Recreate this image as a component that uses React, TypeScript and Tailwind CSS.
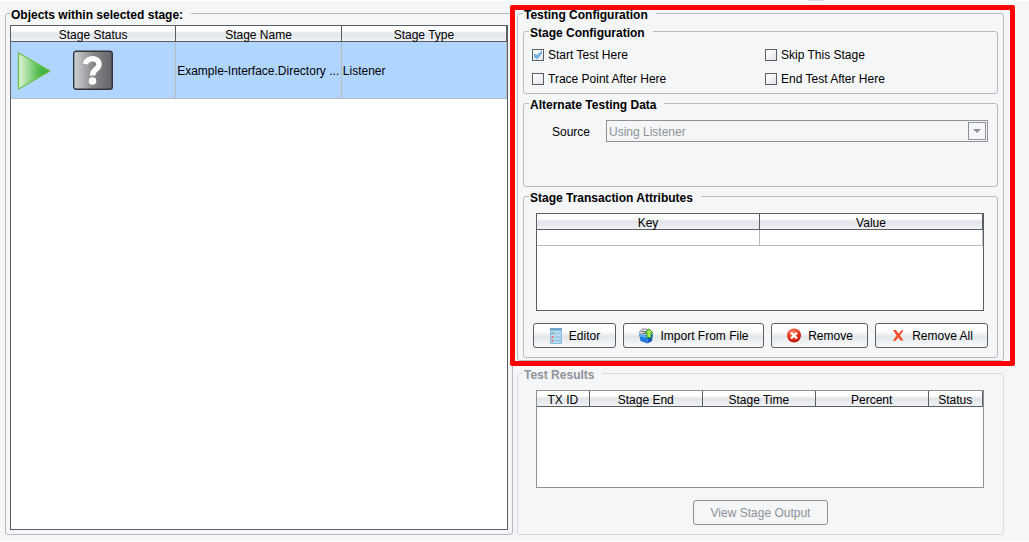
import type { ReactNode } from 'react'

type Column = { label: string; width: string }

const stageColumns: Column[] = [
  { label: 'Stage Status', width: 'w-[33.3%]' },
  { label: 'Stage Name', width: 'w-[33.4%]' },
  { label: 'Stage Type', width: 'w-[33.3%]' },
]

const attributeColumns: Column[] = [
  { label: 'Key', width: 'w-1/2' },
  { label: 'Value', width: 'w-1/2' },
]

const resultColumns: Column[] = [
  { label: 'TX ID', width: 'w-[11.8%]' },
  { label: 'Stage End', width: 'w-[25.4%]' },
  { label: 'Stage Time', width: 'w-[25.3%]' },
  { label: 'Percent', width: 'w-[25.3%]' },
  { label: 'Status', width: 'w-[12.2%]' },
]

const stageOptions = [
  { id: 'start-test', label: 'Start Test Here', checked: true },
  { id: 'skip-stage', label: 'Skip This Stage', checked: false },
  { id: 'trace-point', label: 'Trace Point After Here', checked: false },
  { id: 'end-test', label: 'End Test After Here', checked: false },
]

function PlayIcon() {
  return (
    <svg width="36" height="40" viewBox="0 0 36 40" aria-hidden="true">
      <defs>
        <linearGradient id="play" x1="0" x2="1" y1="0" y2="0">
          <stop offset="0" stopColor="#e4f5d8" />
          <stop offset="0.65" stopColor="#4fbb4c" />
          <stop offset="1" stopColor="#2fae35" />
        </linearGradient>
      </defs>
      <path d="M1.500 3L33 21 L1.500 39 Z" fill="url(#play)" stroke="#6cc24a" strokeWidth="1.400" strokeLinejoin="round" />
    </svg>
  )
}

function UnknownIcon() {
  return (
    <svg width="40" height="40" viewBox="0 0 40 40" aria-hidden="true">
      <defs>
        <linearGradient id="unknown" x1="0" x2="1" y1="0" y2="0">
          <stop offset="0" stopColor="#d2d3d5" />
          <stop offset="0.5" stopColor="#88898c" />
          <stop offset="1" stopColor="#626366" />
        </linearGradient>
      </defs>
      <rect x="0.7" y="1.200" width="38.6" height="38.1" rx="2.500" fill="url(#unknown)" stroke="#333438" strokeWidth="1.400" />
      <path d="M12.500 14 C13.500 7 26 7 26 14.500 C26 19.500 19.500 19 19.500 25.500" fill="none" stroke="#fff" strokeWidth="5.500" />
      <circle cx="19.5" cy="31" r="3.800" fill="#fff" />
    </svg>
  )
}

function EditorIcon() {
  return (
    <svg width="14" height="16" viewBox="0 0 14 16" aria-hidden="true">
      <rect x="1.5" y="0.5" width="11" height="15" fill="#b5d9ef" stroke="#8bbddb" />
      <path d="M1 0h12v2.500H1z" fill="#6ba6cc" />
      <path d="M6 5.500h6M6 9h6M6 12.500h6" stroke="#8cbfe0" strokeWidth="1" />
      <path d="M2.500 5l1 1 1.500-2" fill="none" stroke="#3f9a68" />
      <path d="M2.500 8h2v2h-2zM2.500 11.800h2v2h-2z" fill="#e2737c" />
    </svg>
  )
}

function ImportIcon() {
  return (
    <svg width="16" height="16" viewBox="0 0 16 16" aria-hidden="true">
      <path d="M1.500 4L4 1h5l3 3v4h-9z" fill="#d9dadb" stroke="#8b8d90" />
      <path d="M3.500 3.500h5M4 5.500h5" stroke="#6b6e72" />
      <path d="M1 6l8.500 1.500v8L2.500 13z" fill="#1f78dc" />
      <path d="M9.500 7.500L15 6l-1 7-4.500 2.500z" fill="#1158b8" />
      <path d="M1.500 6.500l8 1.500v2L2 8.500z" fill="#62aef5" />
      <path d="M11 .8L14.800 5H13v4.500H9V5H7.200z" fill="#a6ee56" stroke="#2b9a1c" />
    </svg>
  )
}

function RemoveIcon() {
  return (
    <svg width="16" height="16" viewBox="0 0 16 16" aria-hidden="true">
      <defs>
        <radialGradient id="remove" cx="0.4" cy="0.3" r="0.7">
          <stop offset="0" stopColor="#ff8a63" />
          <stop offset="0.6" stopColor="#e9361c" />
          <stop offset="1" stopColor="#b81408" />
        </radialGradient>
      </defs>
      <circle cx="8" cy="7.500" r="7" fill="url(#remove)" />
      <path d="M5 4.500l6 6M11 4.500l-6 6" stroke="#fff" strokeWidth="2.400" />
    </svg>
  )
}

function RemoveAllIcon() {
  return (
    <svg width="16" height="16" viewBox="0 0 16 16" aria-hidden="true">
      <path d="M3 2h3l2.500 3.500L12 2l1.500.5L10 7.500l3.500 5h-3L8 9.500 5.500 13 3 12.500l3.500-5z" fill="#f2512c" />
    </svg>
  )
}

function Panel({ title, muted, className, children }: { title: string; muted?: boolean; className: string; children: ReactNode }) {
  return (
    <fieldset className={`min-w-0 rounded-[3px] border ${muted ? 'border-[#d8dadd]' : 'border-[#b8bbbf]'} ${className}`}>
      <legend className={`pt-[3px] pr-2 pl-px font-bold leading-[14px] ${muted ? 'text-[#8e9297]' : 'text-black'}`}>{title}</legend>
      {children}
    </fieldset>
  )
}

function HeaderRow({ columns }: { columns: Column[] }) {
  return (
    <thead>
      <tr>
        {columns.map((column) => (
          <th
            key={column.label}
            scope="col"
            className={`h-4 border-r border-b border-[#5b5f64] bg-linear-to-b from-white from-30% via-[#e2e5e9] via-50% to-[#f0f2f4] p-0 pt-[3px] text-center font-normal leading-3 whitespace-nowrap ${column.width}`}
          >
            {column.label}
          </th>
        ))}
      </tr>
    </thead>
  )
}

function ToolButton({ icon, label }: { icon: ReactNode; label: string }) {
  return (
    <button
      type="button"
      className="flex h-[25px] items-center justify-center gap-1.5 rounded-[3px] border border-[#5b5f64] bg-linear-to-b from-white from-30% via-[#e4e7ea] via-55% to-[#f8f9fa] whitespace-nowrap"
    >
      {icon}
      {label}
    </button>
  )
}

export default function App() {
  return (
    <main className="min-h-screen border-b border-white bg-[#f4f6f8] font-['Liberation_Sans',Arial,sans-serif] text-[12px] leading-4 text-black">
      <div className="flex h-px justify-end bg-white pr-[205px]">
        <div className="w-4 bg-[#dcdde0]" />
      </div>

      <div className="grid grid-cols-[508fr_487fr] gap-1 pt-1 pr-[25px] pb-1.5 pl-[5px]">
        {/* Stage list */}
        <Panel title="Objects within selected stage:" className="flex flex-col px-1 pt-[3px] pb-1">
          <div className="h-full flex-1 border border-[#5b5f64] bg-white">
            <table className="w-full table-fixed border-separate border-spacing-0">
              <HeaderRow columns={stageColumns} />
              <tbody>
                <tr className="bg-[#b0d5ff]">
                  <td className="h-[57px] border-r border-b border-[#b8bbbf] p-0">
                    <div className="flex items-center gap-5 pl-1.5">
                      <PlayIcon />
                      <UnknownIcon />
                    </div>
                  </td>
                  <td className="border-r border-b border-[#b8bbbf] p-0 pt-0.5 pl-px whitespace-nowrap">Example-Interface.Directory ...</td>
                  <td className="border-r border-b border-[#b8bbbf] p-0 pt-0.5 pl-px whitespace-nowrap">Listener</td>
                </tr>
              </tbody>
            </table>
          </div>
        </Panel>

        <div className="flex min-w-0 flex-col gap-1">
          <div className="relative">
            <Panel title="Testing Configuration" className="px-[5px] pt-px pb-0.5">
              <div className="flex flex-col gap-px">
                <Panel title="Stage Configuration" className="px-[5px] pt-[3px] pb-0.5">
                  <div className="grid grid-cols-[233fr_227fr] pl-[3px]">
                    {stageOptions.map((option) => (
                      <label key={option.id} htmlFor={option.id} className="flex h-6 items-center gap-1">
                        <span className="relative flex">
                          <input
                            id={option.id}
                            type="checkbox"
                            defaultChecked={option.checked}
                            className="peer size-3 appearance-none border border-[#5b5f64] bg-linear-to-br from-white to-[#e3e5e8]"
                          />
                          <svg className="pointer-events-none absolute inset-0 hidden peer-checked:block" width="12" height="12" viewBox="0 0 12 12">
                            <path d="M2 4.500l3 1.500L10 1.500v3L5 10.500 2 8z" fill="#6fb0e4" />
                          </svg>
                        </span>
                        {option.label}
                      </label>
                    ))}
                  </div>
                </Panel>

                <Panel title="Alternate Testing Data" className="px-[5px] pt-2 pb-11">
                  <div className="flex items-center pr-1 pl-[23px]">
                    <label htmlFor="source" className="w-[54px] pt-0.5">Source</label>
                    <div className="relative flex-1">
                      <select
                        id="source"
                        disabled
                        className="block h-[22px] w-full appearance-none border border-[#8e9297] bg-transparent pt-0.5 pl-0.5 text-[#8e9297] opacity-100"
                      >
                        <option>Using Listener</option>
                      </select>
                      <span className="pointer-events-none absolute top-0.5 right-0.5 flex size-[18px] items-center justify-center border border-[#8e9297]">
                        <svg width="8" height="4" viewBox="0 0 8 4">
                          <path d="M0 0h8L4 4z" fill="#8e9297" />
                        </svg>
                      </span>
                    </div>
                  </div>
                </Panel>

                <Panel title="Stage Transaction Attributes" className="px-[5px] pt-2 pb-[9px]">
                  <div className="mr-2 ml-[7px] h-[98px] border border-[#5b5f64] bg-white">
                    <table className="w-full table-fixed border-separate border-spacing-0">
                      <HeaderRow columns={attributeColumns} />
                      <tbody>
                        <tr>
                          <td className="h-4 border-r border-b border-[#b8bbbf] p-0" />
                          <td className="h-4 border-r border-b border-[#b8bbbf] p-0" />
                        </tr>
                      </tbody>
                    </table>
                  </div>
                  <div className="mt-3 grid grid-cols-[83fr_141fr_97fr_113fr] gap-[7px] px-1">
                    <ToolButton icon={<EditorIcon />} label="Editor" />
                    <ToolButton icon={<ImportIcon />} label="Import From File" />
                    <ToolButton icon={<RemoveIcon />} label="Remove" />
                    <ToolButton icon={<RemoveAllIcon />} label="Remove All" />
                  </div>
                </Panel>
              </div>
            </Panel>
            {/* Highlight around the configuration area */}
            <div className="pointer-events-none absolute top-0 -right-[11px] -bottom-[5px] -left-[7px] rounded-[2px] border-[5px] border-[#ff0000]" />
          </div>

          <Panel title="Test Results" muted className="px-[5px] pt-2 pb-[9px]">
            <div className="mr-3.5 ml-[13px] h-[98px] border border-[#8e9297] bg-white">
              <table className="w-full table-fixed border-separate border-spacing-0">
                <HeaderRow columns={resultColumns} />
              </table>
            </div>
            <div className="mt-3 flex justify-center">
              <button type="button" disabled className="h-[25px] w-[135px] rounded-[3px] border border-[#8e9297] text-[#8e9297]">
                View Stage Output
              </button>
            </div>
          </Panel>
        </div>
      </div>
    </main>
  )
}
